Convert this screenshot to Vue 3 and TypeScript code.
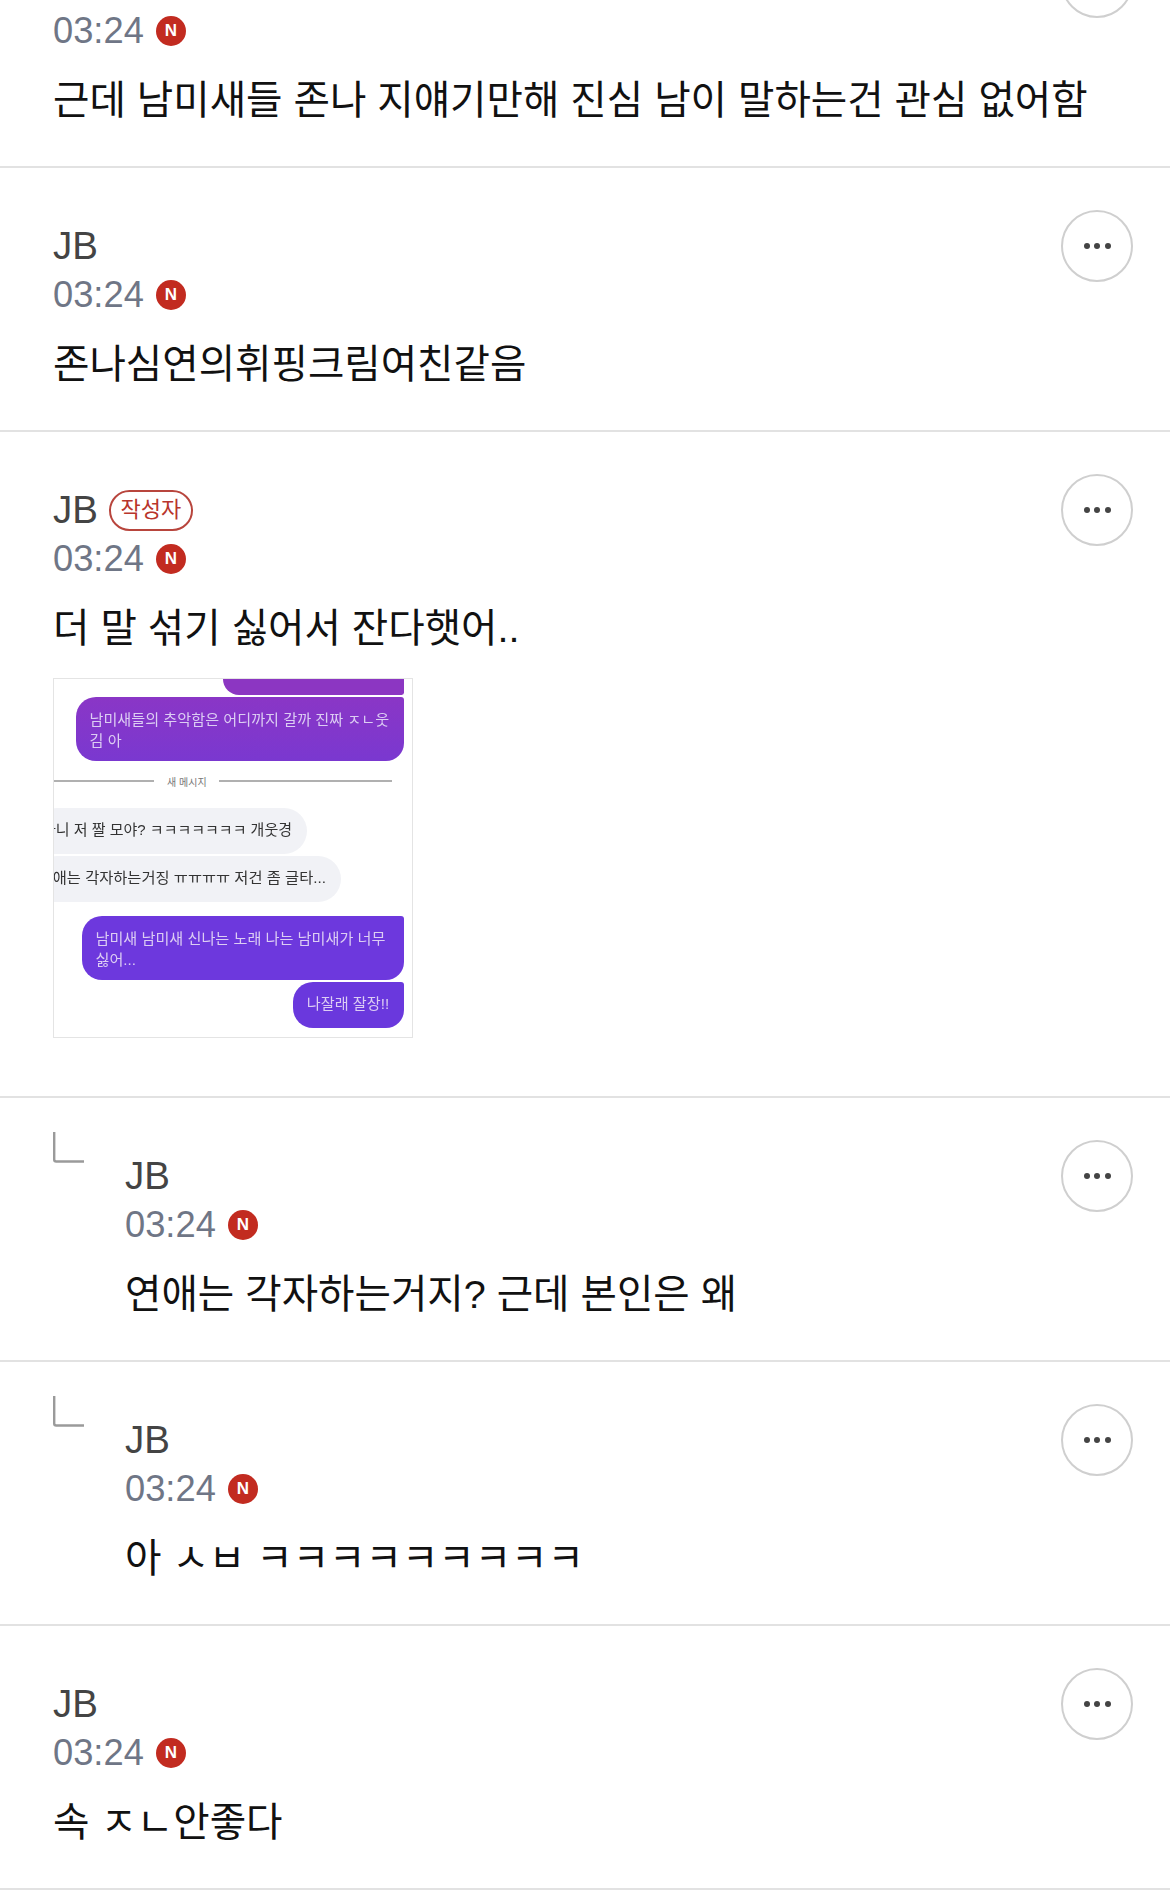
<script setup lang="ts">
interface Comment {
  text: string
  reply?: boolean
  author?: boolean
  shot?: boolean
}
const comments: Comment[] = [
  { text: '근데 남미새들 존나 지얘기만해 진심 남이 말하는건 관심 없어함' },
  { text: '존나심연의휘핑크림여친같음' },
  { text: '더 말 섞기 싫어서 잔다햇어..', author: true, shot: true },
  { text: '연애는 각자하는거지? 근데 본인은 왜', reply: true },
  { text: '아 ㅅㅂ ㅋㅋㅋㅋㅋㅋㅋㅋㅋ', reply: true },
  { text: '속 ㅈㄴ안좋다' },
]
</script>

<template>
  <main class="page">
    <div class="list">
      <article v-for="(c, i) in comments" :key="i" class="row">
        <div v-if="c.reply" class="reply-mark">
          <svg width="32" height="32" viewBox="0 0 32 32" fill="none">
            <path d="M1.2 0V27.5Q1.2 29.5 3.2 29.5H31" stroke="#9a9a9a" stroke-width="2.4" />
          </svg>
        </div>
        <div class="body">
          <div class="name-line">
            <span class="name">JB</span>
            <span v-if="c.author" class="tag">작성자</span>
          </div>
          <div class="time-line">
            <span class="time">03:24</span>
            <span class="new">N</span>
          </div>
          <p class="text">{{ c.text }}</p>
          <div v-if="c.shot" class="shot">
            <div class="bub me top"></div>
            <div class="bub me m1 two">남미새들의 추악함은 어디까지 갈까 진짜 ㅈㄴ웃김 아</div>
            <div class="divider"><i class="l"></i><span>새 메시지</span><i class="r"></i></div>
            <div class="bub you y1">아니 저 짤 모야? ㅋㅋㅋㅋㅋㅋㅋ 개웃경</div>
            <div class="bub you y2">연애는 각자하는거징 ㅠㅠㅠㅠ 저건 좀 글타...</div>
            <div class="bub me m2 two">남미새 남미새 신나는 노래 나는 남미새가 너무 싫어...</div>
            <div class="bub me m3">나잘래 잘장!!</div>
          </div>
        </div>
        <button class="more" type="button" aria-label="더보기">
          <i></i><i></i><i></i>
        </button>
      </article>
    </div>
  </main>
</template>

<style>
html, body { margin: 0; background: #fff; }
</style>

<style scoped>
.page {
  width: 1170px;
  height: 1899px;
  overflow: hidden;
  background: #fff;
  font-family: "Liberation Sans", "Noto Sans CJK KR", sans-serif;
}
.list { margin-top: -96px; }
.row {
  display: flex;
  align-items: flex-start;
  padding: 42px 37px 40px 53px;
  border-bottom: 2px solid #e2e2e2;
}
.reply-mark { width: 72px; flex: none; margin-top: -8px; }
.body { flex: 1; min-width: 0; padding-top: 14px; }
.name-line {
  display: flex;
  align-items: center;
  gap: 11px;
  height: 44px;
}
.name { font-size: 38.5px; color: #444; line-height: 44px; }
.tag {
  box-sizing: border-box;
  width: 84px;
  height: 41px;
  border: 2px solid #b8453d;
  border-radius: 21px;
  color: #b8352c;
  font-size: 22px;
  line-height: 36px;
  text-align: center;
}
.time-line {
  display: flex;
  align-items: center;
  gap: 12px;
  height: 54px;
}
.time { font-size: 36.3px; color: #6f7686; line-height: 54px; }
.new {
  width: 30px;
  height: 30px;
  border-radius: 50%;
  background: #c22b20;
  color: #fff;
  font-size: 17px;
  font-weight: 700;
  line-height: 30px;
  text-align: center;
}
.text {
  margin: 16px 0 0;
  font-size: 39.6px;
  line-height: 52px;
  color: #111;
  white-space: nowrap;
}
.more {
  flex: none;
  box-sizing: border-box;
  width: 72px;
  height: 72px;
  padding: 0;
  border: 2px solid #cfcfcf;
  border-radius: 50%;
  background: #fff;
  display: flex;
  align-items: center;
  justify-content: center;
  gap: 4.5px;
}
.more i { width: 6px; height: 6px; border-radius: 50%; background: #444; }
.shot {
  box-sizing: border-box;
  width: 360px;
  height: 360px;
  margin-top: 24px;
  margin-bottom: 18px;
  border: 1px solid #e4e4e4;
  overflow: hidden;
  display: flex;
  flex-direction: column;
  padding-right: 8.5px;
  font-size: 15.15px;
}
.bub { box-sizing: border-box; flex: none; filter: blur(0.35px); }
.me {
  align-self: flex-end;
  color: #dccdf3;
  border-radius: 20px 3px 18px 20px;
}
.top {
  width: 181px;
  height: 16px;
  background: #8c36c2;
  border-radius: 0 0 3px 20px;
}
.m1 {
  width: 328px;
  height: 64px;
  margin-top: 2px;
  padding: 12px 14px 12px 14px;
  line-height: 21px;
  background: linear-gradient(#8a36c6, #7a38d0);
}
.divider {
  flex: none;
  height: 40px;
  display: flex;
  align-items: center;
  font-size: 10px;
  color: #777;
  margin-right: 12px;
}
.divider i { height: 2px; background: #b0b0b0; }
.divider .l { width: 100px; }
.divider span { margin: 0 12px 0 13px; white-space: nowrap; }
.divider .r { flex: 1; }
.you {
  align-self: flex-start;
  height: 46px;
  margin-left: -20px;
  background: #f1f2f6;
  border-radius: 23px;
  color: #333;
  line-height: 44px;
  white-space: nowrap;
  display: flex;
  justify-content: flex-end;
  padding-right: 15px;
}
.y1 { width: 273px; margin-top: 7px; font-size: 15px; }
.y2 { width: 307px; margin-top: 2px; font-size: 15.3px; }
.m2 {
  width: 322px;
  height: 64px;
  margin-top: 14px;
  padding: 12px 13px 12px 14px;
  line-height: 21px;
  background: #6d38dd;
}
.m3 {
  width: 111px;
  height: 46px;
  margin-top: 2px;
  line-height: 44px;
  text-align: center;
  background: #6a38dd;
}
</style>
